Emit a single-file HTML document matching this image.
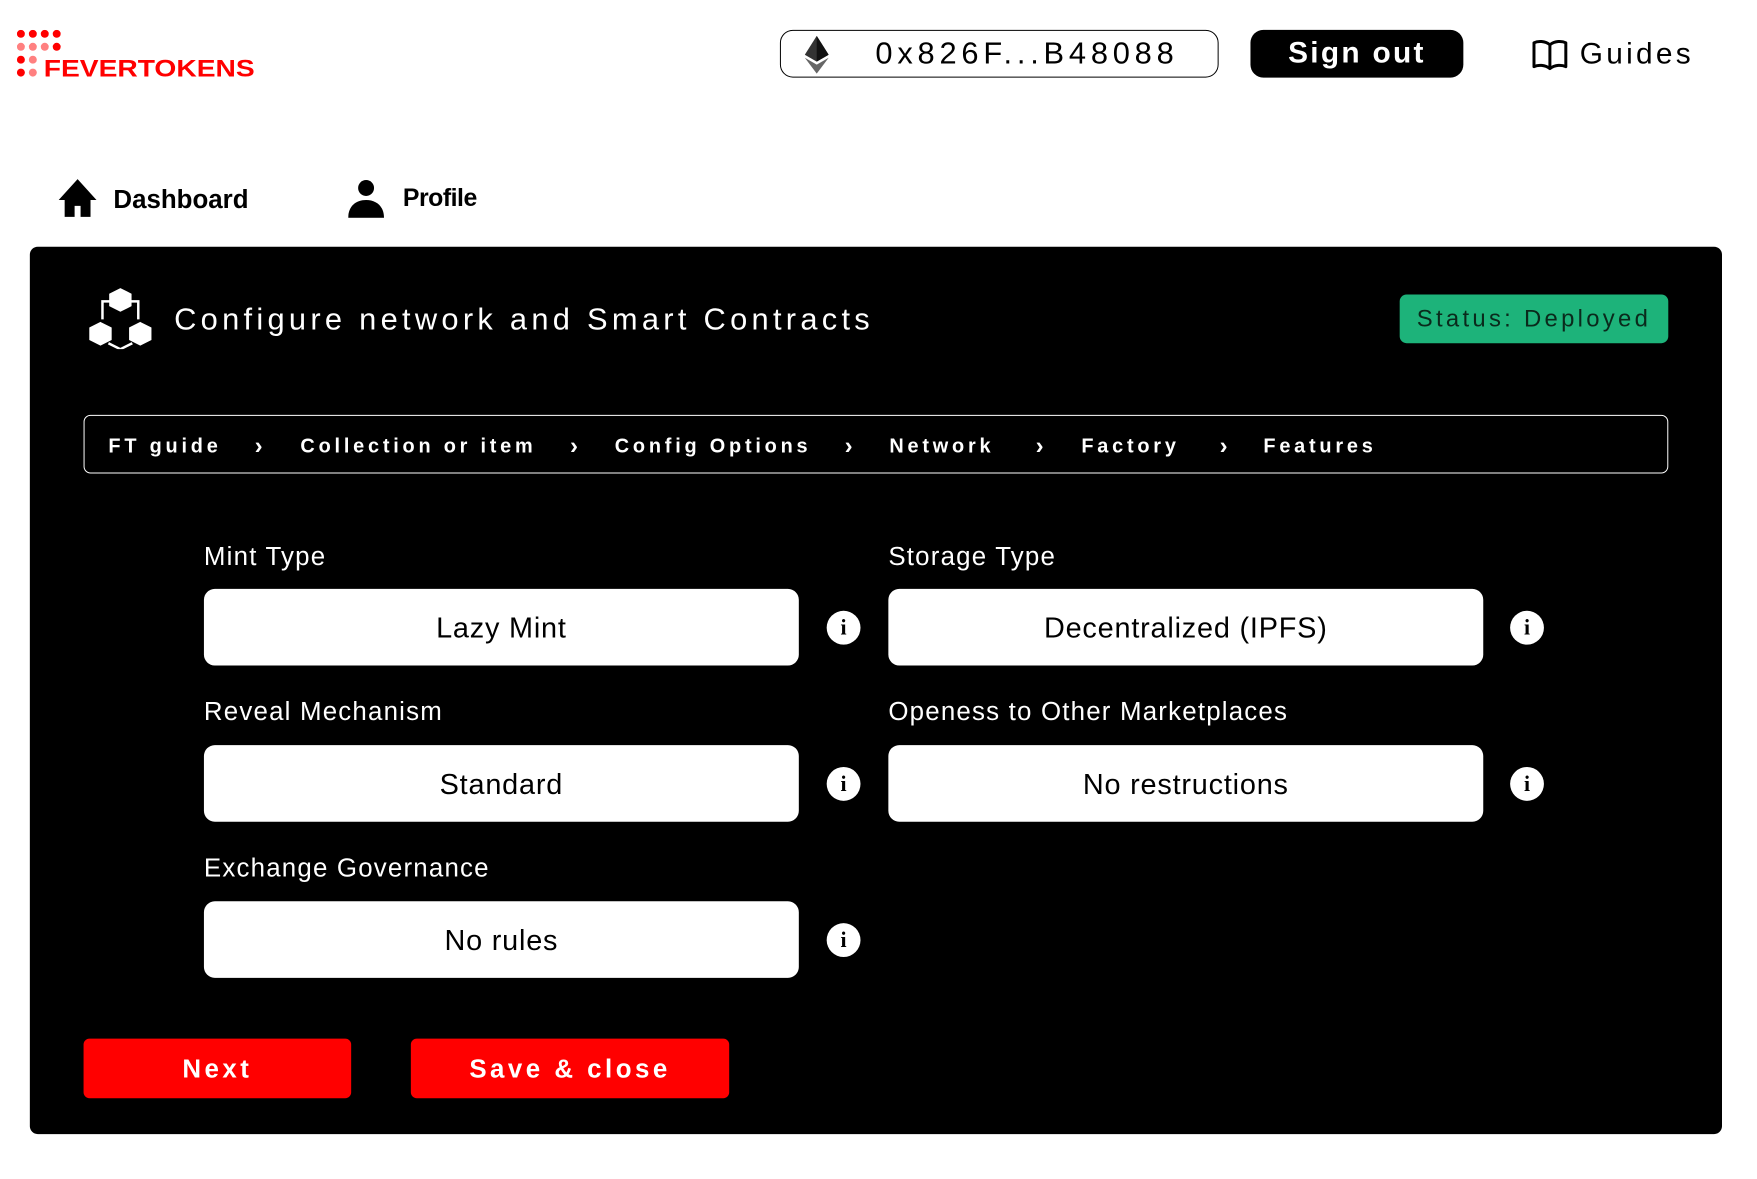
<!DOCTYPE html>
<html><head><meta charset="utf-8"><style>
*{margin:0;padding:0;box-sizing:border-box}
body{width:1757px;height:1179px;background:#fff;position:relative;overflow:hidden;font-family:"Liberation Sans",sans-serif;color:#000}
#w{position:absolute;left:0;top:0;width:1757px;height:1179px;transform:scale(0.9948);transform-origin:0 0}
.a{position:absolute;white-space:nowrap}
.panel{position:absolute;left:30px;top:248px;width:1701px;height:892px;background:#000;border-radius:8px}
.lbl{position:absolute;color:#fff;font-size:26px;letter-spacing:1.2px}
.box{position:absolute;background:#fff;border-radius:11px;height:77px;width:598px;display:flex;align-items:center;justify-content:center;font-size:29px;letter-spacing:0.8px;color:#000;padding-top:3px}
.info{position:absolute;width:34px;height:34px;border-radius:50%;background:#fff;color:#000;font:bold 22px "Liberation Serif",serif;display:flex;align-items:center;justify-content:center}
.bc{position:absolute;top:438px;color:#fff;font-weight:bold;font-size:20px;letter-spacing:3.8px}
.ch{position:absolute;top:435px;color:#fff;font-weight:bold;font-size:24px}
.btn{position:absolute;top:1044px;height:60px;background:#ff0000;border-radius:6px;color:#fff;font-weight:bold;font-size:26px;letter-spacing:3.5px;display:flex;align-items:center;justify-content:center}
</style></head><body><div id="w">
<svg class="a" style="left:17px;top:30px" width="245" height="48" viewBox="0 0 245 48">
<g fill="#f00"><circle cx="4" cy="4" r="4"/><circle cx="16" cy="4" r="4"/><circle cx="28" cy="4" r="4"/><circle cx="40" cy="4" r="4"/><circle cx="40" cy="17" r="4"/><circle cx="4" cy="30" r="4"/><circle cx="4" cy="43" r="4"/></g>
<g fill="#ff8080"><circle cx="4" cy="17" r="4"/><circle cx="16" cy="17" r="4"/><circle cx="28" cy="17" r="4"/><circle cx="16" cy="30" r="4"/><circle cx="16" cy="43" r="4"/></g>
<text x="27" y="47" fill="#f00" font-family="Liberation Sans" font-size="24" font-weight="bold" textLength="212" lengthAdjust="spacingAndGlyphs">FEVERTOKENS</text>
</svg>
<div class="a" style="left:784px;top:30px;width:441px;height:48px;border:1.5px solid #000;border-radius:13px"></div>
<svg class="a" style="left:809px;top:36px" width="24" height="38" viewBox="0 0 24 38"><path d="M12 0L0 19l12 7 12-7z" fill="#333"/><path d="M12 0v26l12-7z" fill="#111"/><path d="M0 22l12 16 12-16-12 7z" fill="#666"/></svg>
<div class="a" style="left:880px;top:36px;font-size:31px;letter-spacing:4.8px">0x826F...B48088</div>
<div class="a" style="left:1257px;top:30px;width:214px;height:48px;background:#000;border-radius:13px;color:#fff;font-size:30px;font-weight:bold;letter-spacing:2.3px;display:flex;align-items:center;justify-content:center">Sign out</div>
<svg class="a" style="left:1539px;top:39px" width="38" height="32" viewBox="0 0 38 32"><path d="M19 6C14 2 7 2 3 4v24c4-2 11-2 16 2 5-4 12-4 16-2V4c-4-2-11-2-16 2zM19 6v24" fill="none" stroke="#000" stroke-width="3" stroke-linejoin="round"/></svg>
<div class="a" style="left:1588px;top:38px;font-size:30px;letter-spacing:3.3px">Guides</div>
<svg class="a" style="left:58px;top:179px" width="40" height="40" viewBox="0 0 40 40"><path d="M20 1L1 22h6v17h10v-11h6v11h10V22h6z" fill="#000"/></svg>
<div class="a" style="left:114px;top:185px;font-size:26px;font-weight:bold;letter-spacing:0px">Dashboard</div>
<svg class="a" style="left:350px;top:181px" width="36" height="38" viewBox="0 0 36 38"><circle cx="18" cy="8" r="8"/><path d="M0 38C0 26 8 20 18 20s18 6 18 18z"/></svg>
<div class="a" style="left:405px;top:185px;font-size:25px;font-weight:bold;letter-spacing:-0.5px">Profile</div>
<div class="panel"></div>
<svg class="a" style="left:89px;top:289px" width="64" height="62" viewBox="0 0 64 62" fill="none" stroke="#fff" stroke-width="2.5"><path d="M32 2l10 5v11l-10 5-10-5V7z" fill="#fff"/><path d="M12 36l10 5v11l-10 5-10-5V41z" fill="#fff"/><path d="M52 36l10 5v11l-10 5-10-5V41z" fill="#fff"/><path d="M22 14h-8v18M42 14h8v18M20 56l12 6 12-6"/></svg>
<div class="a" style="left:175px;top:303px;color:#fff;font-size:31px;letter-spacing:4.3px">Configure network and Smart Contracts</div>
<div class="a" style="left:1407px;top:296px;width:270px;height:49px;background:#1db37a;border-radius:7px;font-size:24px;letter-spacing:3.3px;display:flex;align-items:center;justify-content:center;color:#0a2a1c">Status: Deployed</div>
<div class="a" style="left:84px;top:417px;width:1593px;height:59px;border:1.5px solid #fff;border-radius:7px"></div>
<div class="bc" style="left:109px">FT guide</div><div class="ch" style="left:256px">&#x203A;</div>
<div class="bc" style="left:302px">Collection or item</div><div class="ch" style="left:573px">&#x203A;</div>
<div class="bc" style="left:618px">Config Options</div><div class="ch" style="left:849px">&#x203A;</div>
<div class="bc" style="left:894px">Network</div><div class="ch" style="left:1041px">&#x203A;</div>
<div class="bc" style="left:1087px">Factory</div><div class="ch" style="left:1226px">&#x203A;</div>
<div class="bc" style="left:1270px">Features</div>
<div class="lbl" style="left:205px;top:544px">Mint Type</div>
<div class="lbl" style="left:893px;top:544px">Storage Type</div>
<div class="box" style="left:205px;top:592px">Lazy Mint</div>
<div class="box" style="left:893px;top:592px">Decentralized (IPFS)</div>
<div class="info" style="left:831px;top:614px">i</div><div class="info" style="left:1518px;top:614px">i</div>
<div class="lbl" style="left:205px;top:700px">Reveal Mechanism</div>
<div class="lbl" style="left:893px;top:700px">Openess to Other Marketplaces</div>
<div class="box" style="left:205px;top:749px">Standard</div>
<div class="box" style="left:893px;top:749px">No restructions</div>
<div class="info" style="left:831px;top:771px">i</div><div class="info" style="left:1518px;top:771px">i</div>
<div class="lbl" style="left:205px;top:857px">Exchange Governance</div>
<div class="box" style="left:205px;top:906px">No rules</div>
<div class="info" style="left:831px;top:928px">i</div>
<div class="btn" style="left:84px;width:269px">Next</div>
<div class="btn" style="left:413px;width:320px">Save &amp; close</div>
</div></body></html>
